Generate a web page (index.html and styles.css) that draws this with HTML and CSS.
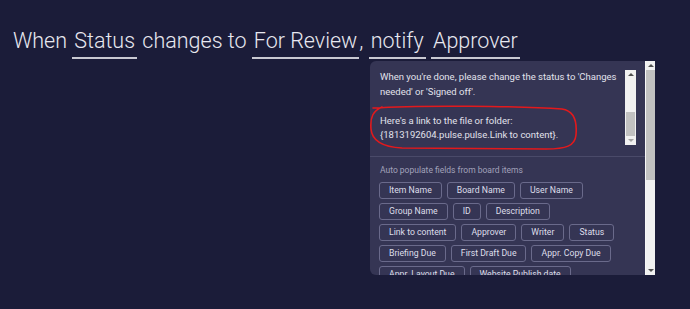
FILE: index.html
```html
<!DOCTYPE html>
<html lang="en">
<head>
  <meta charset="UTF-8">
  <meta name="viewport" content="width=device-width, initial-scale=1.0">
  <title>Automation recipe</title>
  <link rel="stylesheet" href="styles.css">
</head>
<body>
  <div class="recipe">
    When <span class="field">Status</span> changes to <span class="field">For Review</span>, <span class="field">notify</span> <span class="field">Approver</span>
  </div>

  <div class="panel">
    <div class="panel-body">
      <div class="message">
        <div class="textarea">
          <div class="textarea-text">
            When you're done, please change the status to 'Changes needed' or 'Signed off'.<br><br>
            Here's a link to the file or folder:<br>
            {1813192604.pulse.pulse.Link to content}.
          </div>
          <div class="scroll small">
            <div class="arrow up"></div>
            <div class="track"><div class="thumb"></div></div>
            <div class="arrow down"></div>
          </div>
        </div>
        <svg class="scribble" width="220" height="50" viewBox="0 0 220 50">
          <path d="M3,4 C50,1 150,2 192,5 C206,7 207,20 206,31 C205,42 196,45 176,45 L32,44 C12,43 2,37 1,25 C0,13 3,7 12,3" fill="none" stroke="#e3191c" stroke-width="1.6" stroke-linecap="round"/>
        </svg>
      </div>
      <div class="fields">
        <div class="fields-label">Auto populate fields from board items</div>
        <div class="chips">
          <span class="chip">Item Name</span>
          <span class="chip">Board Name</span>
          <span class="chip">User Name</span>
          <span class="chip">Group Name</span>
          <span class="chip">ID</span>
          <span class="chip">Description</span>
          <span class="chip">Link to content</span>
          <span class="chip">Approver</span>
          <span class="chip">Writer</span>
          <span class="chip">Status</span>
          <span class="chip">Briefing Due</span>
          <span class="chip">First Draft Due</span>
          <span class="chip">Appr. Copy Due</span>
          <span class="chip">Appr. Layout Due</span>
          <span class="chip">Website Publish date</span>
        </div>
      </div>
    </div>
    <div class="scroll big">
      <div class="arrow up"></div>
      <div class="track"><div class="thumb"></div></div>
      <div class="arrow down"></div>
    </div>
  </div>
</body>
</html>
```

FILE: styles.css
```css
body {
  margin: 0;
  background-color: #1b1c39;
  font-family: Roboto, 'Liberation Sans', sans-serif;
  color: #e4e4ee;
  height: 309px;
  overflow: hidden;
}

.recipe {
  box-sizing: border-box;
  height: 61px;
  padding: 29px 0 0 13px;
  font-size: 21.5px;
  font-weight: 300;
  line-height: 24px;
  color: #e8e8f0;
  white-space: nowrap;
}

.field {
  display: inline-block;
  padding: 0 2px 4px;
  border-bottom: 2px solid #c9c9d2;
  line-height: 24px;
  vertical-align: top;
}

.panel {
  display: flex;
  margin-left: 370px;
  width: 285px;
  height: 214px;
  background-color: #353554;
  border-radius: 6px 0 0 6px;
  overflow: hidden;
}

.panel-body {
  flex: 1;
  display: flex;
  flex-direction: column;
  overflow: hidden;
}

.message {
  position: relative;
  flex-shrink: 0;
  box-sizing: border-box;
  height: 96px;
  padding: 8px 9px 0 8px;
  border-bottom: 1px solid #4a4a69;
}

.textarea {
  display: flex;
  height: 77px;
}

.textarea-text {
  flex: 1;
  padding: 1px 2px 0 2px;
  font-size: 9.5px;
  line-height: 14.5px;
  color: #e2e2ec;
}

.scribble {
  position: absolute;
  left: 0;
  top: 43px;
}

.scroll {
  display: flex;
  flex-direction: column;
  background-color: #f1f1f1;
}

.scroll.small {
  width: 11px;
  margin-top: 1px;
  height: 75px;
}

.scroll.big {
  width: 10px;
  border-left: 1px solid #f7f7f7;
  box-sizing: border-box;
}

.arrow {
  height: 9px;
  position: relative;
}

.arrow::after {
  content: "";
  position: absolute;
  left: 50%;
  top: 3px;
  margin-left: -3px;
  border-left: 3px solid transparent;
  border-right: 3px solid transparent;
}

.arrow.up::after {
  border-bottom: 3px solid #505050;
}

.arrow.down::after {
  border-top: 3px solid #a3a3a3;
}

.scroll.big .arrow.down::after {
  border-top-color: #505050;
}

.track {
  flex: 1;
  display: flex;
  flex-direction: column;
}

.scroll.small .track {
  justify-content: flex-end;
}

.thumb {
  background-color: #c1c1c1;
  margin: 0 1px;
}

.scroll.small .thumb {
  height: 24px;
}

.scroll.big .thumb {
  height: 110px;
  margin: 0;
}

.fields {
  padding: 6px 10px 0 9px;
}

.fields-label {
  padding-left: 1px;
  font-size: 8.5px;
  line-height: 14px;
  color: #a2a2ba;
  margin-bottom: 5px;
}

.chips {
  display: flex;
  flex-wrap: wrap;
  gap: 4px 5px;
  width: 246px;
}

.chip {
  box-sizing: border-box;
  height: 17px;
  padding: 0 9px;
  border: 1px solid #6a6a8b;
  border-radius: 3px;
  font-size: 8.7px;
  line-height: 15px;
  color: #dedeea;
  white-space: nowrap;
}
```
